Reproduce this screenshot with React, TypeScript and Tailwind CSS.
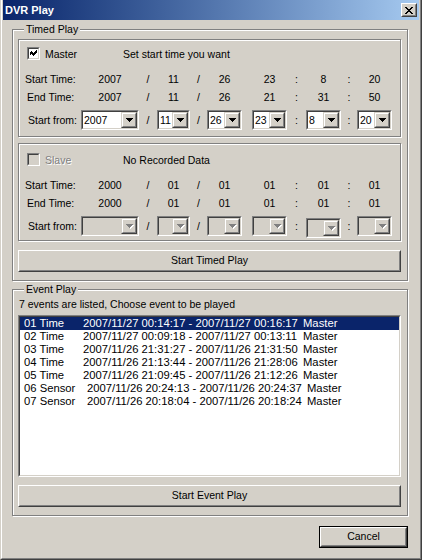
import React from 'react';

const GRID =
  'grid grid-cols-[57px_58px_18px_33px_17px_35px_10px_35px_19px_35px_16px_35px]';

function Arrow({ disabled }: { disabled?: boolean }) {
  const fill = disabled ? '#808080' : '#000';
  return (
    <svg width="8" height="5" shapeRendering="crispEdges">
      {disabled && (
        <g fill="#fff">
          <rect x="1" y="1" width="7" height="1" />
          <rect x="2" y="2" width="5" height="1" />
          <rect x="3" y="3" width="3" height="1" />
          <rect x="4" y="4" width="1" height="1" />
        </g>
      )}
      <g fill={fill}>
        <rect x="0" y="0" width="7" height="1" />
        <rect x="1" y="1" width="5" height="1" />
        <rect x="2" y="2" width="3" height="1" />
        <rect x="3" y="3" width="1" height="1" />
      </g>
    </svg>
  );
}

function DropButton({ disabled }: { disabled?: boolean }) {
  return (
    <div className="w-[16px] h-full border border-t-[#d4d0c8] border-l-[#d4d0c8] border-r-[#404040] border-b-[#404040]">
      <div className="h-full flex items-center justify-center pl-px pt-px bg-[#d4d0c8] border border-t-white border-l-white border-r-[#808080] border-b-[#808080]">
        <Arrow disabled={disabled} />
      </div>
    </div>
  );
}

function Combo({ value, disabled, className }: { value?: string; disabled?: boolean; className?: string }) {
  return (
    <div className={`h-[20px] border border-t-[#808080] border-l-[#808080] border-r-white border-b-white ${className ?? ''}`}>
      <div
        className={`h-full flex border border-t-[#404040] border-l-[#404040] border-r-[#d4d0c8] border-b-[#d4d0c8] ${
          disabled ? 'bg-[#d4d0c8]' : 'bg-white'
        }`}
      >
        <span className="flex-1 pl-px leading-[16px] overflow-hidden whitespace-nowrap">{value}</span>
        <DropButton disabled={disabled} />
      </div>
    </div>
  );
}

function CheckBox({ checked, disabled }: { checked?: boolean; disabled?: boolean }) {
  return (
    <div className="w-[13px] h-[13px] border border-t-[#808080] border-l-[#808080] border-r-white border-b-white">
      <div
        className={`h-full flex items-center justify-center border border-t-[#404040] border-l-[#404040] border-r-[#d4d0c8] border-b-[#d4d0c8] ${
          disabled ? 'bg-[#d4d0c8]' : 'bg-white'
        }`}
      >
        {checked && (
          <svg width="7" height="7" shapeRendering="crispEdges" fill="#000">
            <rect x="6" y="0" width="1" height="3" />
            <rect x="5" y="1" width="1" height="3" />
            <rect x="4" y="2" width="1" height="3" />
            <rect x="3" y="3" width="1" height="3" />
            <rect x="2" y="2" width="1" height="3" />
            <rect x="1" y="1" width="1" height="3" />
            <rect x="0" y="2" width="1" height="3" />
          </svg>
        )}
      </div>
    </div>
  );
}

function TimeRow({ label, values, labelClass, className }: { label: string; values: string[]; labelClass: string; className: string }) {
  const cells = [values[0], '/', values[1], '/', values[2], '', values[3], ':', values[4], ':', values[5]];
  return (
    <div className={`${GRID} h-[14px] leading-[14px] pl-[5px] ${className}`}>
      <span className={`whitespace-nowrap ${labelClass}`}>{label}</span>
      {cells.map((c, i) => (
        <span key={i} className="text-center">
          {c}
        </span>
      ))}
    </div>
  );
}

function ComboRow({ values, disabled, className }: { values: string[]; disabled?: boolean; className: string }) {
  const sep = (s: string) => <span className="text-center leading-[20px]">{s}</span>;
  return (
    <div className={`${GRID} h-[20px] pl-[5px] items-start ${className}`}>
      <span className="pl-[4px] leading-[20px] whitespace-nowrap">Start from:</span>
      <Combo value={values[0]} disabled={disabled} />
      {sep('/')}
      <Combo value={values[1]} disabled={disabled} />
      {sep('/')}
      <Combo value={values[2]} disabled={disabled} />
      <span />
      <Combo value={values[3]} disabled={disabled} />
      {sep(':')}
      <Combo value={values[4]} disabled={disabled} className={disabled ? 'mt-[2px]' : ''} />
      {sep(':')}
      <Combo value={values[5]} disabled={disabled} />
    </div>
  );
}

function Button({ label, isDefault, className }: { label: string; isDefault?: boolean; className?: string }) {
  const face = (
    <div className="h-full border border-t-white border-l-white border-r-[#404040] border-b-[#404040]">
      <div className="h-full flex items-center justify-center border border-t-[#d4d0c8] border-l-[#d4d0c8] border-r-[#808080] border-b-[#808080]">
        {label}
      </div>
    </div>
  );
  return (
    <div className={`h-[22px] ${isDefault ? 'border border-black' : ''} ${className ?? ''}`}>{face}</div>
  );
}

const ETCHED = 'border border-[#808080] shadow-[inset_1px_1px_0_#fff,1px_1px_0_#fff]';

function ChannelBox({
  slave,
}: {
  slave?: boolean;
}) {
  return (
    <div className={`h-[98px] ${ETCHED}`}>
      <div className={`flex items-center h-[13px] pl-[8px] ${slave ? 'mt-[9px]' : 'mt-[7px]'}`}>
        <CheckBox checked={!slave} disabled={slave} />
        {slave ? (
          <span className="w-[83px] pl-[5px] leading-[14px] text-[#808080] [text-shadow:1px_1px_0_#fff]">Slave</span>
        ) : (
          <span className="w-[83px] pl-[5px] leading-[14px]">Master</span>
        )}
        <span className="leading-[14px]">{slave ? 'No Recorded Data' : 'Set start time you want'}</span>
      </div>
      <TimeRow
        className="mt-[12px]"
        labelClass="pl-px"
        label="Start Time:"
        values={slave ? ['2000', '01', '01', '01', '01', '01'] : ['2007', '11', '26', '23', '8', '20']}
      />
      <TimeRow
        className="mt-[4px]"
        labelClass="pl-[3px]"
        label="End Time:"
        values={slave ? ['2000', '01', '01', '01', '01', '01'] : ['2007', '11', '26', '21', '31', '50']}
      />
      <ComboRow
        className="mt-[6px]"
        disabled={slave}
        values={slave ? ['', '', '', '', '', ''] : ['2007', '11', '26', '23', '8', '20']}
      />
    </div>
  );
}

const EVENTS: [string, string, boolean][] = [
  ['01 Time', '2007/11/27 00:14:17 - 2007/11/27 00:16:17', false],
  ['02 Time', '2007/11/27 00:09:18 - 2007/11/27 00:13:11', false],
  ['03 Time', '2007/11/26 21:31:27 - 2007/11/26 21:31:50', false],
  ['04 Time', '2007/11/26 21:13:44 - 2007/11/26 21:28:06', false],
  ['05 Time', '2007/11/26 21:09:45 - 2007/11/26 21:12:26', false],
  ['06 Sensor', '2007/11/26 20:24:13 - 2007/11/26 20:24:37', true],
  ['07 Sensor', '2007/11/26 20:18:04 - 2007/11/26 20:18:24', true],
];

export default function App() {
  return (
    <div className="w-[422px] h-[560px] bg-[#d4d0c8] text-black text-[10.5px] font-['Liberation_Sans',Arial,sans-serif] border-l border-r border-b border-l-[#d4d0c8] border-r-[#404040] border-b-[#404040]">
      <div className="h-full flex flex-col px-px pb-px border-l border-r border-b border-l-white border-r-[#808080] border-b-[#808080]">
        {/* Caption */}
        <div className="h-[20px] shrink-0 flex items-center justify-between pl-[2px] pr-[2px] bg-gradient-to-r from-[#0a246a] to-[#a6caf0]">
          <span className="text-white font-bold text-[11px] leading-[14px]">DVR Play</span>
          <div className="w-[16px] h-[14px] border border-t-white border-l-white border-r-[#404040] border-b-[#404040]">
            <div className="h-full flex items-center justify-center bg-[#d4d0c8] border border-t-[#d4d0c8] border-l-[#d4d0c8] border-r-[#808080] border-b-[#808080]">
              <svg width="8" height="7" shapeRendering="crispEdges" fill="#000">
                <path d="M0 0h2v1h1v1h2V1h1V0h2v1H7v1H6v1H5v1h1v1h1v1h1v1H6V6H5V5H3v1H2v1H0V6h1V5h1V4h1V3H2V2H1V1H0z" />
              </svg>
            </div>
          </div>
        </div>

        {/* Body */}
        <div className="flex-1 flex flex-col pl-[9px] pr-[11px]">
          <fieldset className={`mt-[2px] px-[5px] pr-[6px] pb-[8px] ${ETCHED}`}>
            <legend className="ml-[6px] px-[2px] leading-[14px] bg-[#d4d0c8]">Timed Play</legend>
            <div className="mt-[3px] flex flex-col gap-[6px]">
              <ChannelBox />
              <ChannelBox slave />
            </div>
            <Button label="Start Timed Play" className="mt-[9px]" />
          </fieldset>

          <fieldset className={`mt-px px-[5px] pr-[6px] pb-[8px] ${ETCHED}`}>
            <legend className="ml-[6px] px-[2px] leading-[14px] bg-[#d4d0c8]">Event Play</legend>
            <div className="mt-px h-[14px] leading-[14px] pl-px">7 events are listed, Choose event to be played</div>
            <div className="mt-[4px] h-[162px] border border-t-[#808080] border-l-[#808080] border-r-white border-b-white">
              <div className="h-full bg-white text-[11.25px] border border-t-[#404040] border-l-[#404040] border-r-[#d4d0c8] border-b-[#d4d0c8]">
                {EVENTS.map(([name, range, sensor], i) => (
                  <div
                    key={name}
                    className={`h-[13px] leading-[13px] flex pl-[4px] whitespace-nowrap ${
                      i === 0 ? 'bg-[#0a246a] text-white' : ''
                    }`}
                  >
                    <span className={sensor ? 'w-[63px]' : 'w-[59px]'}>{name}</span>
                    <span className="w-[220px]">{range}</span>
                    <span>Master</span>
                  </div>
                ))}
              </div>
            </div>
            <Button label="Start Event Play" className="mt-[8px]" />
          </fieldset>

          <div className="mt-[10px] flex justify-end">
            <Button label="Cancel" isDefault className="w-[89px]" />
          </div>
        </div>
      </div>
    </div>
  );
}
